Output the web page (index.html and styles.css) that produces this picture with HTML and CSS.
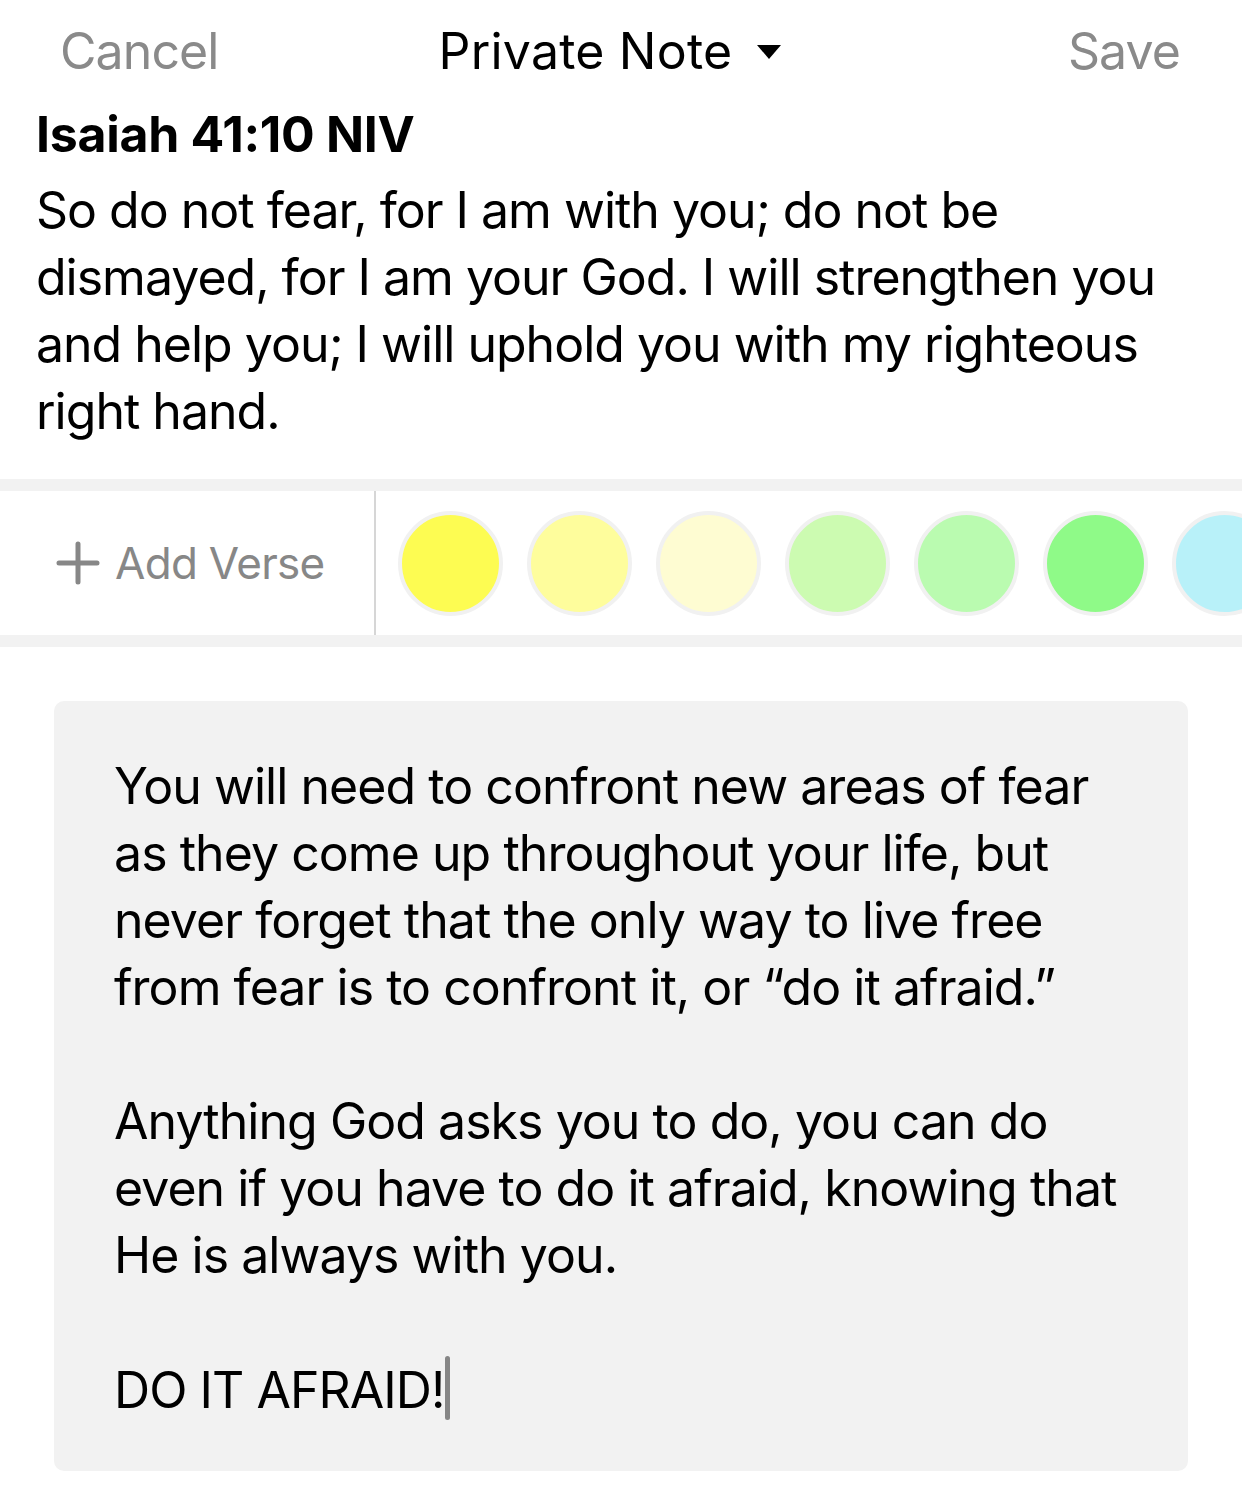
FILE: index.html
```html
<!DOCTYPE html>
<html lang="en">
<head>
<meta charset="utf-8">
<title>Private Note</title>
<link rel="stylesheet" href="styles.css">
</head>
<body>
<div class="screen">
  <header class="navbar">
    <span class="nav-btn">Cancel</span>
    <span class="nav-title">Private Note
      <svg class="caret" width="26" height="16" viewBox="0 0 26 16"><path d="M1 1 L25 1 L13 15 Z" fill="#000"/></svg>
    </span>
    <span class="nav-btn save">Save</span>
  </header>

  <section class="verse">
    <h1 class="verse-ref">Isaiah 41:10 NIV</h1>
    <p class="verse-text">So do not fear, for I am with you; do not be<br>dismayed, for I am your God. I will strengthen you<br>and help you; I will uphold you with my righteous<br>right hand.</p>
  </section>

  <div class="toolbar">
    <div class="add-verse">
      <svg class="plus" width="44" height="44" viewBox="0 0 44 44"><path d="M22 3 V41 M3 22 H41" stroke="#878787" stroke-width="5" stroke-linecap="round" fill="none"/></svg>
      <span>Add Verse</span>
    </div>
    <div class="swatches">
      <span class="swatch c1"></span>
      <span class="swatch c2"></span>
      <span class="swatch c3"></span>
      <span class="swatch c4"></span>
      <span class="swatch c5"></span>
      <span class="swatch c6"></span>
      <span class="swatch c7"></span>
    </div>
  </div>

  <div class="note">
    <p class="note-text">You will need to confront new areas of fear<br>as they come up throughout your life, but<br>never forget that the only way to live free<br>from fear is to confront it, or “do it afraid.”<br><br>Anything God asks you to do, you can do<br>even if you have to do it afraid, knowing that<br>He is always with you.<br><br>DO IT AFRAID!<span class="cursor"></span></p>
  </div>
</div>
</body>
</html>
```

FILE: styles.css
```css
* { box-sizing: border-box; }
html, body { margin: 0; padding: 0; background: #fff; }
body {
  font-family: Inter, "Noto Sans", sans-serif;
  color: #000;
  width: 1242px;
  height: 1492px;
  overflow: hidden;
}
.screen { width: 1242px; }

.navbar {
  height: 101px;
  display: flex;
  align-items: center;
  padding: 0 62px 0 60px;
  font-size: 50px;
}
.nav-btn { color: #8a8a8a; letter-spacing: -0.9px; }
.save { margin-left: auto; }
.nav-title {
  display: flex;
  align-items: center;
  gap: 24px;
  color: #000;
  margin-left: 220px;
  letter-spacing: 0.2px;
}
.caret { margin-top: 2px; }

.verse { padding: 0 38px 34px 36px; }
.verse-ref {
  margin: 0;
  font-size: 50px;
  font-weight: 700;
  line-height: 67px;
  letter-spacing: -0.3px;
}
.verse-text {
  margin: 9px 0 0 0;
  font-size: 50px;
  line-height: 67px;
  letter-spacing: -1.0px;
  white-space: nowrap;
}

.toolbar {
  display: flex;
  border-top: 12px solid #f2f2f2;
  border-bottom: 12px solid #f2f2f2;
  height: 168px;
  overflow: hidden;
}
.add-verse {
  width: 376px;
  flex: none;
  display: flex;
  align-items: center;
  gap: 15px;
  padding-left: 56px;
  border-right: 2px solid #d6d6d6;
  color: #878787;
  font-size: 44px;
  letter-spacing: -0.7px;
}
.swatches {
  display: flex;
  align-items: center;
  gap: 24px;
  padding-left: 22px;
}
.swatch {
  flex: none;
  width: 105px;
  height: 105px;
  border-radius: 50%;
  border: 4px solid #f1f1f1;
}
.c1 { background: #fdfc52; }
.c2 { background: #fefd9c; }
.c3 { background: #fefcd2; }
.c4 { background: #ccfbb1; }
.c5 { background: #bafbb0; }
.c6 { background: #8ffa88; }
.c7 { background: #b8f1f9; }

.note {
  margin: 54px 54px 0 54px;
  height: 770px;
  background: #f2f2f2;
  border-radius: 10px;
  padding: 52px 40px 0 60px;
}
.note-text {
  margin: 0;
  font-size: 50px;
  line-height: 67px;
  letter-spacing: -0.95px;
  white-space: nowrap;
}
.cursor {
  display: inline-block;
  width: 5px;
  height: 64px;
  background: #868686;
  border-radius: 3px;
  vertical-align: -12px;
  margin-left: 1px;
}
```
